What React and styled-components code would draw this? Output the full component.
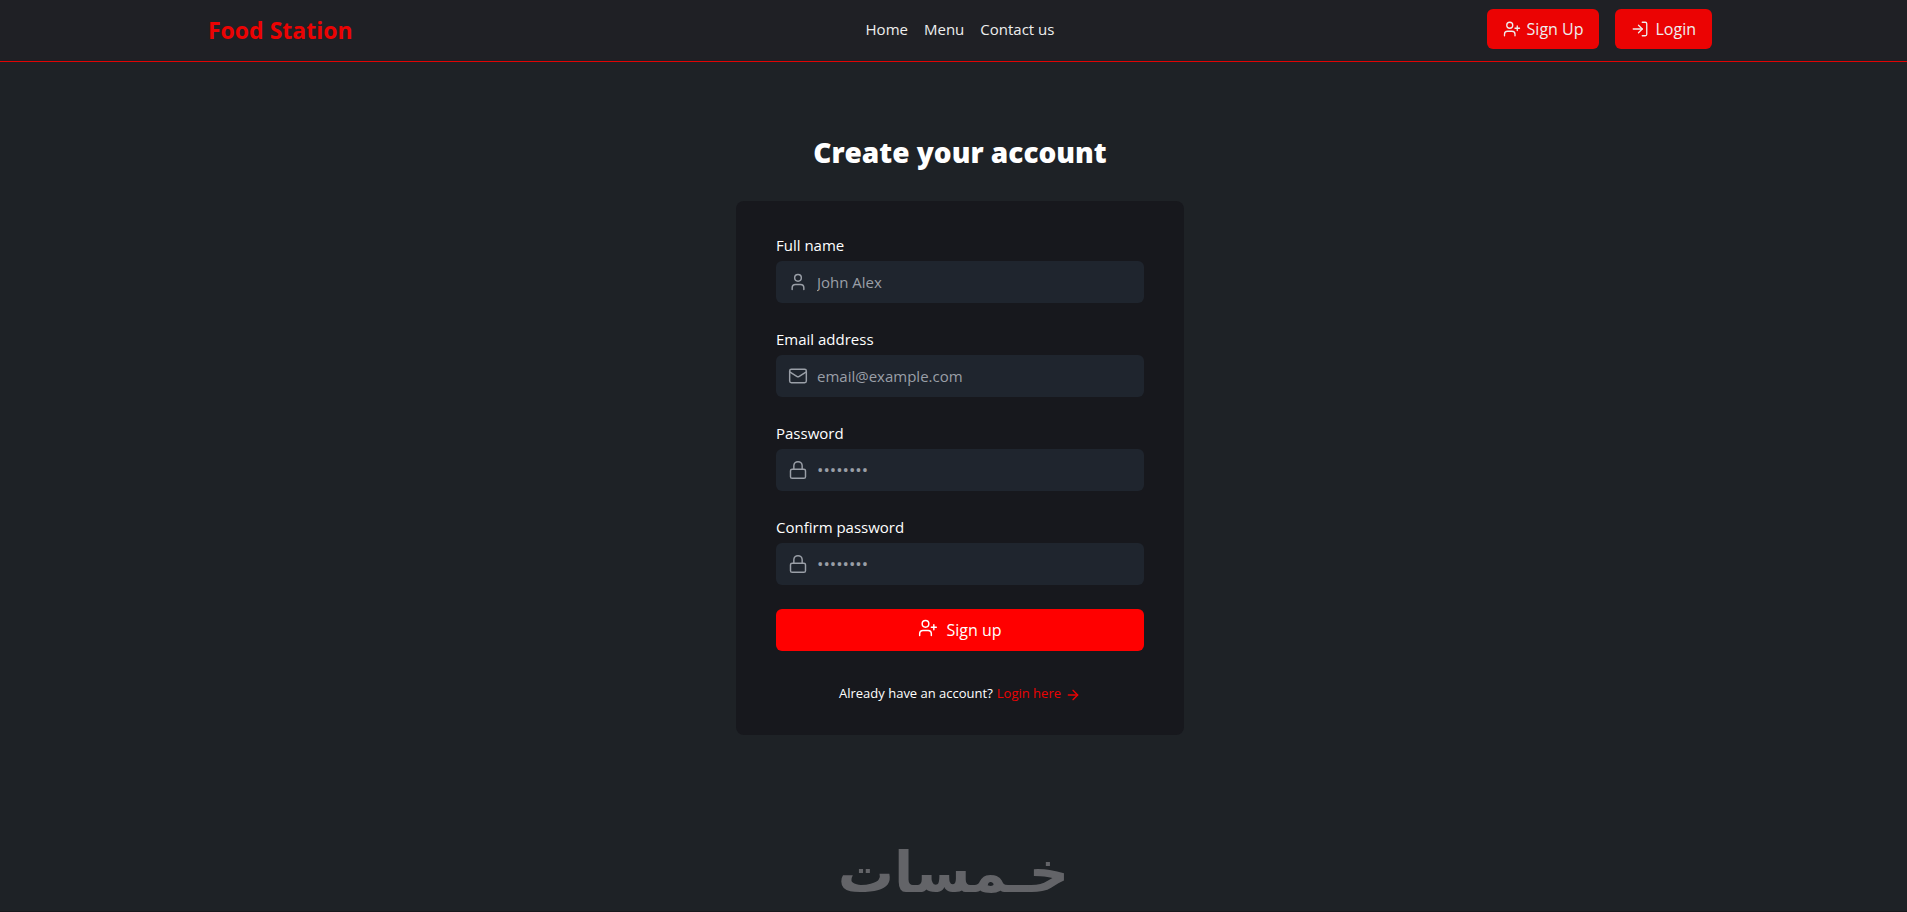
import React, { useState } from "react";
import styled, { createGlobalStyle } from "styled-components";
import { ArrowRight, Lock, LogIn, Mail, User, UserPlus } from "lucide-react";

const GlobalStyle = createGlobalStyle`
  * {
    box-sizing: border-box;
  }
  body {
    margin: 0;
    background-color: #1e2226;
    color: #fff;
    font-family: "Segoe UI", "Open Sans", "Noto Sans", sans-serif;
    font-size: 15px; line-height: 24px;
  }
`;
const Container = styled.div`
  display: flex; flex-direction: column;
  min-height: 100vh;
  overflow-x: hidden;
  border-bottom: 1px solid #18191d;
`;
const Header = styled.header`
  background-color: #1f2025;
  border-bottom: 1px solid #e00404;
  padding: 9px 16px 12px 29px;
`;
const HeaderContent = styled.div`
  display: grid; grid-template-columns: 1fr auto 1fr;
  align-items: center;
  max-width: 1504px; margin: 0 auto;
  @media (max-width: 700px) {
    grid-template-columns: 1fr;
    justify-items: center; gap: 12px;
  }
`;
const Brand = styled.a`
  padding-top: 2px;
  color: #eb0303;
  font-size: 23px; font-weight: 700; line-height: 32px;
  text-decoration: none;
`;
const Nav = styled.nav`
  display: flex; gap: 16px;
`;
const NavLink = styled.a`
  color: #eee;
  text-decoration: none;
  &:hover {
    color: #eb0303;
  }
`;
const Actions = styled.div`
  display: flex; gap: 16px;
  justify-content: flex-end;
`;
const HeaderButton = styled.button`
  display: flex; align-items: center; gap: 6px;
  height: 40px; padding: 0 16px;
  background-color: #eb0303;
  border: none; border-radius: 6px;
  color: #eee; font: inherit; font-size: 16px;
  cursor: pointer;
`;
const Main = styled.main`
  display: flex; flex-direction: column;
  align-items: center;
  flex: 1;
  padding: 72px 0 32px 13px;
`;
const Title = styled.h1`
  margin: 0 0 30px;
  font-size: 28px; font-weight: 800; line-height: 37px;
`;
const Card = styled.form`
  display: flex; flex-direction: column; gap: 24px;
  width: 100%; max-width: 448px;
  padding: 32px 40px;
  background-color: #17181d;
  border-radius: 8px;
`;
const FieldContainer = styled.div`
  display: flex; flex-direction: column; gap: 4px;
`;
const InputWrapper = styled.div`
  display: flex; align-items: center; gap: 9px;
  height: 42px; padding: 0 12px;
  background-color: #1f252e;
  border-radius: 6px;
  color: #9a9fa7;
`;
const Input = styled.input`
  flex: 1; min-width: 0; padding: 0;
  background-color: transparent;
  border: none; outline: none;
  color: #fff; font: inherit;
  &::placeholder {
    color: #9a9fa7; opacity: 1;
    font-size: ${(props) => (props.type === "password" ? "17px" : "15px")};
  }
`;
const SubmitButton = styled.button`
  display: flex; align-items: center; justify-content: center;
  gap: 8px; height: 42px;
  background-color: #f00;
  border: none; border-radius: 6px;
  color: #fff; font: inherit; font-size: 16px;
  cursor: pointer;
  svg {
    margin-bottom: 4px;
  }
`;
const LoginText = styled.p`
  display: flex; justify-content: center; gap: 4px;
  margin: 8px 0 0;
  font-size: 13px; line-height: 20px;
`;
const LoginLink = styled.a`
  display: flex; align-items: flex-end; gap: 4px;
  color: #eb0303;
  text-decoration: none;
`;
const Footer = styled.footer`
  display: flex; justify-content: center;
  padding-bottom: 10px;
`;
const FooterLogo = styled.span`
  color: #636468;
  font-family: "DejaVu Sans", sans-serif;
  font-size: 56px; font-weight: 700; line-height: 56px;
`;

const fields = [
  { id: "name", label: "Full name", type: "text", placeholder: "John Alex", Icon: User },
  { id: "email", label: "Email address", type: "email", placeholder: "email@example.com", Icon: Mail },
  { id: "password", label: "Password", type: "password", placeholder: "••••••••", Icon: Lock },
  { id: "confirm", label: "Confirm password", type: "password", placeholder: "••••••••", Icon: Lock },
];

const Field = ({ id, label, Icon, ...rest }) => (
  <FieldContainer>
    <label htmlFor={id}>{label}</label>
    <InputWrapper>
      <Icon size={20} strokeWidth={1.75} />
      <Input id={id} name={id} {...rest} />
    </InputWrapper>
  </FieldContainer>
);

const App = () => {
  const [values, setValues] = useState({});
  const handleChange = (e) => {
    setValues({ ...values, [e.target.name]: e.target.value });
  };
  return (
    <Container>
      <GlobalStyle />
      <Header>
        <HeaderContent>
          <Brand href="#home">Food Station</Brand>
          <Nav>
            <NavLink href="#home">Home</NavLink>
            <NavLink href="#menu">Menu</NavLink>
            <NavLink href="#contact">Contact us</NavLink>
          </Nav>
          <Actions>
            <HeaderButton type="button">
              <UserPlus size={18} strokeWidth={1.75} />
              Sign Up
            </HeaderButton>
            <HeaderButton type="button">
              <LogIn size={18} strokeWidth={1.75} />
              Login
            </HeaderButton>
          </Actions>
        </HeaderContent>
      </Header>
      <Main>
        <Title>Create your account</Title>
        <Card onSubmit={(e) => e.preventDefault()}>
          {fields.map((field) => (
            <Field
              key={field.id}
              {...field}
              value={values[field.id] || ""}
              onChange={handleChange}
            />
          ))}
          <SubmitButton type="submit">
            <UserPlus size={20} strokeWidth={1.75} />
            Sign up
          </SubmitButton>
          <LoginText>
            Already have an account?
            <LoginLink href="#login">
              Login here
              <ArrowRight size={16} strokeWidth={2} />
            </LoginLink>
          </LoginText>
        </Card>
      </Main>
      <Footer>
        <FooterLogo lang="ar" dir="rtl">خـمسات</FooterLogo>
      </Footer>
    </Container>
  );
};

export default App;
